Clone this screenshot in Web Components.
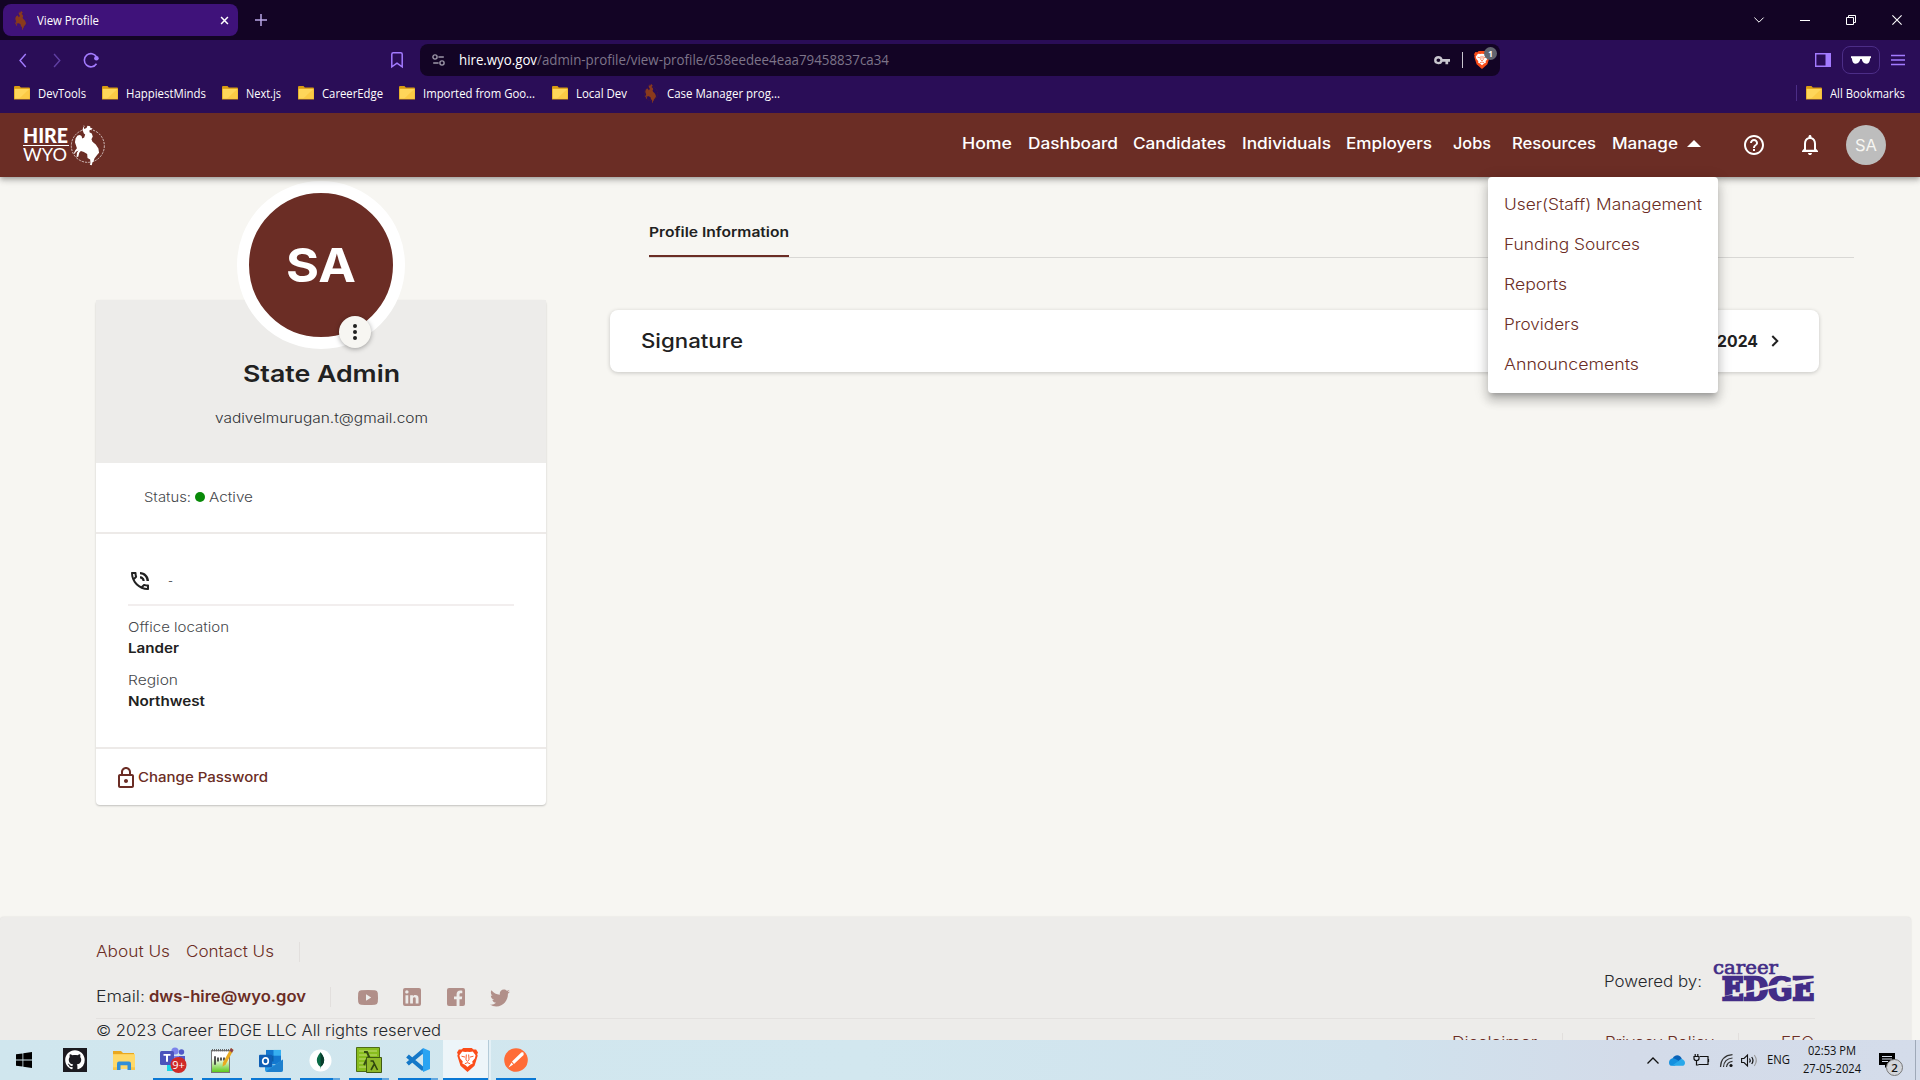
<!DOCTYPE html>
<html lang="en">
<head>
<meta charset="utf-8">
<title>View Profile</title>
<style>
html,body{margin:0;padding:0;width:1920px;height:1080px;overflow:hidden;background:#f7f6f2}
</style>
</head>
<body>
<hw-desktop></hw-desktop>
<script>
const BRONCO='<path d="M223 40l7-3 3-7 8 2 1 5 7 1-7 5-3 1 0 6 7 4 3 9-4 8 3 8 10 8 8 12 2 13-6 7-8 10-3 10-3 2-2 9-6-2 2-5-1-11-8-4-1-12-10-6-9-3-5 5-3 12-5 1 1-13 5-7-8 4-4 7-2-3 4-9 5-6-3-9-3-9 2-12 6-8 7-2 5 3 2 8 6-3 3-9-4-3-4-11 2-8 5-3-4-3z"/>';
const ICONS={
 bronco:['180 28 106 124','<circle cx="234" cy="91" r="50" fill="none" stroke="currentColor" stroke-width="2.6" stroke-dasharray="7 3" opacity=".75"/><g fill="currentColor">'+BRONCO+'</g>'],
 favicon:['186 28 96 124','<circle cx="234" cy="91" r="46" fill="none" stroke="#5a1f35" stroke-width="3" stroke-dasharray="7 5"/><g fill="#8a3a1c">'+BRONCO+'</g>'],
 close:['0 0 10 10','<path d="M1.2 1.2l7.6 7.6M8.8 1.2L1.2 8.8" stroke="currentColor" stroke-width="1.7" fill="none"/>'],
 winclose:['0 0 10 10','<path d="M.4 .4l9.2 9.2M9.6 .4L.4 9.6" stroke="#fff" stroke-width="1.1" fill="none"/>'],
 plus:['0 0 12 12','<path d="M6 0v12M0 6h12" stroke="#b9a6e6" stroke-width="1.5"/>'],
 winchev:['0 0 10 6','<path d="M.4 .6L5 5.2 9.6.6" stroke="#fff" fill="none"/>'],
 winmin:['0 0 10 10','<path d="M0 5.5h10" stroke="#fff"/>'],
 winrest:['0 0 10 10','<path d="M.5 2.5h7v7h-7zM2.5 2.5v-2h7v7h-2" stroke="#fff" fill="none"/>'],
 back:['0 0 9 16','<path d="M7.6 1L1.2 8l6.4 7" stroke="#a37bff" stroke-width="1.6" fill="none"/>'],
 fwd:['0 0 9 16','<path d="M1.2 1l6.4 7-6.4 7" stroke="#603fa3" stroke-width="1.6" fill="none"/>'],
 reload:['0 0 16 16','<path d="M13.5 11.8A6.6 6.6 0 1 1 13.600 4.800" stroke="#a37bff" stroke-width="1.6" fill="none"/><circle cx="13.4" cy="6.2" r="2.300" fill="#a37bff"/>'],
 bookmark:['0 0 12 16','<path d="M.8 2.3Q.8.8 2.3.8h7.4q1.5 0 1.5 1.5v12.6L6 11.2.8 14.9z" stroke="#a37bff" stroke-width="1.5" fill="none"/>'],
 tune:['0 0 13 12','<g stroke="#9d97a8" stroke-width="1.4" fill="none"><circle cx="3" cy="3" r="2.1"/><path d="M6.4 3h5.4M1.2 9h5.4"/><circle cx="10" cy="9" r="2.1"/></g>'],
 key:['0 0 20 12','<path fill="#c9c6cf" fill-rule="evenodd" d="M5.5 0a5.5 5.5 0 1 0 5.2 7.6h3.6V11h3.4V7.6H20V3.9h-9.3A5.5 5.5 0 0 0 5.5 0zm0 3.3a2.4 2.4 0 1 1 0 4.8 2.4 2.4 0 0 1 0-4.8z"/>'],
 brave:['0 0 20 24','<path fill="#fb4d1a" d="M4.200 1.600L6 0h8l1.800 1.600 2.400-.2L20 4.400l-.8 1.800.5 1.600-3 9.900L10 24l-6.700-6.300-3-9.900.5-1.600L0 4.400l1.800-3z"/><path fill="#fff" d="M5 3.600l2.900.5L10 3.700l2.100.4 2.900-.5 2.700 3.700-.6 3-2.600 3.200.5 1.900-2.500 1.400-2.500 2.100-2.500-2.100L5 15.400l.5-1.900-2.600-3.200-.6-3z"/><path fill="none" stroke="#fb4d1a" stroke-width=".9" d="M4.300 8.200l3.400.9M15.700 8.200l-3.400.9M8.900 6.500l-.4 5.300 1.500 1.500 1.500-1.500-.4-5.300M7.500 15.700l2.500-1 2.500 1"/>'],
 sidebar:['0 0 16 14','<path d="M.7.700h14.600v12.600H.7z" stroke="#a37bff" stroke-width="1.4" fill="none"/><path d="M10.500 1h5v12h-5z" fill="#a37bff"/>'],
 glasses:['0 0 20 8','<path fill="#fff" d="M0 .3h20v1.500l-.9.700c-.2 3.500-1.500 5.200-3.900 5.200-2.600 0-4.100-1.900-4.500-4.600h-1.400C8.900 5.800 7.400 7.700 4.800 7.700 2.400 7.700 1.100 6 .9 2.500L0 1.800z"/>'],
 menu:['0 0 14 12','<path d="M0 1.500h14M0 6h14M0 10.500h14" stroke="#a37bff" stroke-width="1.300"/>'],
 folder:['0 0 16 13','<path fill="#d89a12" d="M0 1.200Q0 0 1 0h4.500l1.300 1.500H15q1 0 1 1V12.500H0z"/><path fill="#ffd65a" d="M.6 2.600h15v9.300H.6z"/><path fill="#f9c53c" d="M15.600 2.600v9.300H5z" opacity=".7"/>'],
 tri:['0 0 14 7','<path fill="#fff" d="M0 7L7 0l7 7z"/>'],
 help:['2 2 20 20','<path fill="#fff" d="M11 18h2v-2h-2v2zm1-16C6.480 2 2 6.480 2 12s4.480 10 10 10 10-4.480 10-10S17.520 2 12 2zm0 18c-4.410 0-8-3.590-8-8s3.590-8 8-8 8 3.590 8 8-3.590 8-8 8zm0-14c-2.210 0-4 1.790-4 4h2c0-1.100.9-2 2-2s2 .9 2 2c0 2-3 1.750-3 5h2c0-2.250 3-2.500 3-5 0-2.210-1.790-4-4-4z"/>'],
 bell:['4 2.500 16 19.500','<path fill="#fff" d="M12 22c1.100 0 2-.9 2-2h-4c0 1.100.9 2 2 2zm6-6v-5c0-3.070-1.630-5.640-4.500-6.320V4c0-.83-.67-1.500-1.500-1.500s-1.500.67-1.500 1.500v.680C7.640 5.360 6 7.920 6 11v5l-2 2v1h16v-1l-2-2zm-2 1H8v-6c0-2.480 1.510-4.500 4-4.500s4 2.020 4 4.500v6z"/>'],
 dots:['0 0 4 16','<g fill="#212121"><circle cx="2" cy="2" r="2"/><circle cx="2" cy="8" r="2"/><circle cx="2" cy="14" r="2"/></g>'],
 phone:['3 3 18 18','<path fill="#212121" d="M20 15.500c-1.250 0-2.450-.2-3.570-.570-.1-.03-.21-.05-.31-.05-.26 0-.51.1-.71.290l-2.200 2.200c-2.830-1.440-5.150-3.750-6.590-6.590l2.200-2.200c.28-.28.36-.67.250-1.020C8.700 6.450 8.500 5.250 8.500 4c0-.55-.45-1-1-1H4c-.55 0-1 .45-1 1 0 9.390 7.610 17 17 17 .55 0 1-.45 1-1v-3.500c0-.55-.45-1-1-1zM5.030 5h1.500c.07.880.220 1.750.460 2.590L5.790 8.800c-.41-1.210-.67-2.480-.76-3.800zM19 18.970c-1.320-.09-2.600-.35-3.800-.76l1.200-1.200c.85.240 1.720.390 2.600.450v1.510zM18.500 12H21c0-5-4-9-9-9v2.200c3.600 0 6.500 3 6.500 6.800zm-4 0h2.200c0-2.600-2.100-4.700-4.700-4.700v2.200c1.400 0 2.500 1.100 2.500 2.500z"/>'],
 lock:['4 1 16 21','<path fill="#6b2d25" d="M18 8h-1V6c0-2.760-2.240-5-5-5S7 3.240 7 6v2H6c-1.100 0-2 .9-2 2v10c0 1.100.9 2 2 2h12c1.100 0 2-.9 2-2V10c0-1.100-.9-2-2-2zM9 6c0-1.660 1.340-3 3-3s3 1.340 3 3v2H9V6zm9 14H6V10h12v10zm-6-3c1.100 0 2-.9 2-2s-.9-2-2-2-2 .9-2 2 .9 2 2 2z"/>'],
 chevr:['0 0 8 12','<path d="M1.300 1l5 5-5 5" stroke="#212121" stroke-width="2" fill="none"/>'],
 youtube:['0 0 20 14','<path fill="#b18f89" fill-rule="evenodd" d="M3 .3Q10-.3 17 .3q2.500.2 2.800 2.500.4 4.200 0 8.400-.3 2.300-2.800 2.500-7 .6-14 0Q.5 13.500.2 11.200q-.4-4.200 0-8.400Q.5.500 3 .3zM8 4v6l5.200-3z"/>'],
 linkedin:['3 3 18 18','<path fill="#b18f89" d="M19 3a2 2 0 0 1 2 2v14a2 2 0 0 1-2 2H5a2 2 0 0 1-2-2V5a2 2 0 0 1 2-2h14m-.5 15.500v-5.300a3.260 3.260 0 0 0-3.260-3.260c-.85 0-1.840.520-2.320 1.300v-1.110h-2.790v8.370h2.790v-4.930c0-.77.620-1.400 1.390-1.400a1.400 1.400 0 0 1 1.400 1.400v4.930h2.790M6.880 8.560a1.680 1.680 0 0 0 1.680-1.680c0-.93-.75-1.690-1.680-1.690a1.690 1.690 0 0 0-1.690 1.690c0 .930.760 1.680 1.690 1.680m1.390 9.940v-8.370H5.500v8.370h2.770z"/>'],
 facebook:['3 3 18 18','<path fill="#b18f89" d="M5 3h14a2 2 0 0 1 2 2v14a2 2 0 0 1-2 2h-3.500v-6.800h2.300l.4-2.800h-2.700V9.600c0-.9.400-1.400 1.500-1.400H18.300V5.700c-.4-.1-1.200-.2-2-.2-2.300 0-3.700 1.400-3.700 3.800v2.100H10v2.800h2.600V21H5a2 2 0 0 1-2-2V5a2 2 0 0 1 2-2z"/>'],
 twitter:['1.500 3.500 21 17','<path fill="#b18f89" d="M22.460 6c-.77.350-1.600.580-2.460.690.880-.53 1.560-1.370 1.880-2.380-.83.500-1.750.850-2.720 1.050C18.370 4.500 17.260 4 16 4c-2.350 0-4.270 1.920-4.270 4.290 0 .340.040.670.110.980C8.280 9.090 5.110 7.380 3 4.790c-.37.630-.58 1.370-.58 2.150 0 1.490.750 2.810 1.910 3.560-.71 0-1.370-.2-1.950-.5v.030c0 2.080 1.480 3.820 3.440 4.210a4.220 4.220 0 0 1-1.930.070 4.280 4.280 0 0 0 4 2.980 8.521 8.521 0 0 1-5.330 1.840c-.34 0-.68-.02-1.020-.06C3.440 20.290 5.700 21 8.120 21 16 21 20.330 14.460 20.330 8.790c0-.19 0-.37-.01-.56.840-.6 1.560-1.360 2.140-2.230z"/>'],
 windows:['0 0 16 16','<path d="M0 2.300l6.500-.9v6.200H0zM7.300 1.300L16 0v7.600H7.300zM0 8.400h6.500v6.200L0 13.700zM7.300 8.400H16V16l-8.700-1.300z"/>'],
 github:['0 0 24 24','<path fill="#1c1a20" d="M0 0h24v24H0z"/><path fill="#fff" transform="translate(2.200 2.300) scale(1.220)" d="M8 0C3.580 0 0 3.580 0 8c0 3.540 2.290 6.530 5.470 7.590.4.070.550-.17.550-.38 0-.19-.01-.82-.01-1.490-2.010.370-2.530-.49-2.690-.94-.09-.23-.48-.94-.82-1.130-.28-.15-.68-.52-.01-.53.630-.01 1.080.580 1.230.820.720 1.210 1.870.870 2.330.660.070-.52.280-.87.510-1.070-1.780-.2-3.640-.89-3.640-3.950 0-.87.310-1.590.820-2.150-.08-.2-.36-1.020.080-2.120 0 0 .670-.21 2.200.820.640-.18 1.320-.27 2-.27s1.360.090 2 .270c1.530-1.040 2.200-.82 2.200-.82.440 1.100.160 1.920.080 2.120.510.560.820 1.270.820 2.150 0 3.070-1.870 3.750-3.650 3.950.290.250.540.730.540 1.480 0 1.070-.01 1.930-.01 2.200 0 .210.150.460.550.380A8.010 8.010 0 0 0 16 8c0-4.420-3.580-8-8-8z"/>'],
 explorer:['0 0 22 18','<path fill="#e9a820" d="M0 0h8l2 2h11v4H0z"/><path fill="#ffd968" d="M0 3h22v14H0z"/><path fill="#2f8fd8" d="M4 18v-6q0-2 2-2h10q2 0 2 2v6h-3.500v-4.500h-7V18z"/><path fill="#f7c64a" d="M0 15.500h4V18H0zM18 15.500h4V18h-4z"/>'],
 teams:['0 0 27 26','<circle cx="15" cy="4" r="3.600" fill="#7b83eb"/><circle cx="21.500" cy="5" r="2.700" fill="#5059c9"/><path fill="#5059c9" d="M15 9h10v8q-2 5-7 4z"/><path fill="#7b83eb" d="M9 9h10v11q-4 5-10 1z"/><rect y="4" width="14" height="14" rx="1.500" fill="#4b53bc"/><path fill="#19d5e6" d="M7 18h8v6H7z"/><path fill="#fff" d="M3.500 7h7v1.800H8v6H6v-6H3.500z"/><circle cx="18.500" cy="18" r="8" fill="#cf2a27"/><text x="18.500" y="22" font-family="Open Sans" font-size="11" text-anchor="middle" fill="#fff">9+</text>'],
 notepad:['0 0 24 24','<defs><linearGradient id="n" x2="0" y2="1"><stop offset=".35" stop-color="#fff"/><stop offset="1" stop-color="#59c814"/></linearGradient></defs><path fill="url(#n)" stroke="#777" d="M1.500 2.500h18v21h-18z"/><path d="M2 2h17" stroke="#666" stroke-width="2" stroke-dasharray="1 1"/><path d="M5 8v8M8 9v4M11 9v3M14 9v3" stroke="#222" stroke-width="1.500"/><path fill="#e9ab20" d="M21 0l2.500 2-8 14-3 2 .5-4z"/><path fill="#8b3f4d" d="M21 0l2.500 2-1.500 2.500-2.500-2z"/>'],
 outlook:['0 0 24 24','<path fill="#1378cf" d="M7 1h15v15H7z"/><path fill="#36b0f0" d="M14.500 1H22v6h-7.500z"/><path fill="#0a5ea8" d="M7 7h7.500v6H7z"/><path fill="#2a9be6" d="M6 12l9 5 9-6v11q0 2-2 2H8q-2 0-2-2z"/><path fill="#1265b5" d="M24 11L7 23.500q.5.500 1 .5h14q2 0 2-2z" opacity=".5"/><rect y="6" width="13" height="13" rx="1" fill="#0f5fb5"/><ellipse cx="6.500" cy="12.500" rx="2.800" ry="3.300" fill="none" stroke="#fff" stroke-width="1.700"/>'],
 mongo:['0 0 24 24','<circle cx="12" cy="12" r="11.500" fill="#fff"/><path fill="#0a6b46" d="M12 3.500q5 6 3.500 10.500Q14.500 17 12.300 18.500L12 21l-.3-2.500Q9.500 17 8.500 14 7 9.500 12 3.500z"/><path fill="#0a3d2c" d="M12 3.500q5 6 3.500 10.500Q14.500 17 12.300 18.500z"/>'],
 lambda:['0 0 26 26','<path fill="#88bd1e" stroke="#4d6d16" d="M.5.500h23v24H.5z"/><path d="M3 4h18M3 8h18M3 12h8M3 16h8M3 20h8" stroke="#c3dd76" stroke-width="1"/><path d="M8 5h3l6 14M12 10L8 18" stroke="#344d12" stroke-width="2" fill="none"/><path fill="#8fb82a" stroke="#3f5a12" d="M10.500 10.500h15v15h-15z"/><path d="M14.500 14h2.500l4.500 9M18 17.500L15 23" stroke="#2f450f" stroke-width="1.600" fill="none"/>'],
 vscode:['0 0 24 24','<path d="M1.500 16L17.500 2.500M1.500 8L17.500 21.500" stroke="#1478c8" stroke-width="4.200"/><path fill="#2aa4f2" d="M17 0l7 3v18l-7 3z"/><path fill="#1b8ade" d="M17 0v6.500l-3-2.300z"/>'],
 postman:['0 0 24 24','<circle cx="12" cy="12" r="11.800" fill="#ff6c37"/><path fill="#fff" d="M19.500 4.500q-2-1-3 .7L8 13.500l2 2.500 8-7.500q2.500-2 1.500-4zM7.500 14.500l-3 5 4.700-3z"/>'],
 trayup:['0 0 12 7','<path d="M.5 6.500L6 1l5.500 5.500" stroke="#111" stroke-width="1.300" fill="none"/>'],
 cloud:['0 0 16 10','<path fill="#0a63b8" d="M3 5Q4 .500 8 .200q3.500 0 4.800 3.200l-3 3z"/><path fill="#1490df" d="M0 7q0-3.500 4-4 2-.2 5.500 2.300L6 9.800H3Q0 9.800 0 7z"/><path fill="#28a8ea" d="M3 9.800L9.500 5.500Q12 3 14 4q2 1 2 3 0 2.800-3 2.800z"/>'],
 battery:['0 0 17 12','<path d="M7 2.500h8v8H5.500M15.500 5v3M1 2.500h5v2q0 2-2.500 2T1 4.500zM2.200 2.500V0M4.800 2.500V0M3.500 6.500v4.500h2" stroke="#111" stroke-width="1.200" fill="none"/>'],
 wifi:['0 0 13 13','<path d="M.5 13Q1 1.500 12.500.7M3.500 13Q4 4.800 12.500 4M6.500 13Q7 8 12.500 7.300" stroke="#333" stroke-width="1.200" fill="none"/><circle cx="11" cy="11.500" r="1.600" fill="#111"/>'],
 speaker:['0 0 17 13','<path d="M.6 4.500H3L6.500 1v11L3 8.500H.6z" stroke="#111" stroke-width="1.100" fill="none"/><path d="M8.500 4.500q1.500 2 0 4M10.700 3q2.600 3.500 0 7" stroke="#111" stroke-width="1.200" fill="none"/><path d="M13.300 1q4 5.500 0 11" stroke="#999" stroke-width="1.100" fill="none"/>'],
 notif:['0 0 16 15','<path d="M0 0h16v12H9l-3 3v-3H0z" fill="#000"/><path d="M3 3.500h10M3 6h10M3 8.500h6" stroke="#d4dcea"/>']
};

class HwIcon extends HTMLElement{
 connectedCallback(){
  if(this.shadowRoot)return;
  const [vb,body]=ICONS[this.getAttribute('name')];
  const w=this.getAttribute('w'),h=this.getAttribute('h')||w;
  this.attachShadow({mode:'open'}).innerHTML=`<style>:host{display:block;flex:none;width:${w}px;height:${h}px}svg{display:block;overflow:visible}</style><svg width="${w}" height="${h}" viewBox="${vb}" preserveAspectRatio="none">${body}</svg>`;
 }
}
customElements.define('hw-icon',HwIcon);

/* A label of a set width: the glyphs are stretched or narrowed to fill it. */
class HwLabel extends HTMLElement{
 connectedCallback(){
  if(this.shadowRoot)return;
  const w=+this.getAttribute('w');
  this.attachShadow({mode:'open'}).innerHTML=`<style>:host{display:block;flex:none;width:${w}px;white-space:nowrap}span{display:inline-block;transform-origin:0 50%}</style><span><slot></slot></span>`;
  const s=this.shadowRoot.querySelector('span');
  const n=s.getBoundingClientRect().width;
  if(n)s.style.transform=`scaleX(${w/n})`;
 }
}
customElements.define('hw-label',HwLabel);

function define(tag,css,html){
 const t=document.createElement('template');
 t.innerHTML=`<style>*{box-sizing:border-box}${css}</style>${html}`;
 customElements.define(tag,class extends HTMLElement{
  connectedCallback(){
   if(this.shadowRoot)return;
   this.attachShadow({mode:'open'}).append(document.importNode(t.content,true));
  }
 });
}

define('hw-bookmark',':host{display:flex;align-items:center;flex:none;gap:8px}','<hw-icon name="folder" w="16" h="14"></hw-icon><slot></slot>');

define('hw-chrome',`
:host{display:block;flex:none;height:113px;background:#2a0d57;color:#fff;font:11.8px/16px "Open Sans",sans-serif}
.row{display:flex;align-items:center}
.strip{height:40px;background:#130425;padding-left:3px}
.tab{height:32px;width:235px;border-radius:8px;background:#3f127a;padding:0 9px 0 11px}
.tab hw-label{margin-left:9px}.tab .x{margin-left:auto}
.bar{height:40px;padding-left:19px}
.url{height:32px;width:1080px;margin:0 0 0 17px;border-radius:8px;background:#130425;padding:0 10px 0 12px;font-size:13.600px}
.url .p{color:#7d7489}
.sep{width:1px;background:#c9c6cf;height:16px;margin:0 11px 0 12px}
.shield{position:relative}
.badge{position:absolute;left:10px;top:-4px;width:13px;height:13px;border-radius:7px;background:#636670;color:#fff;font:bold 8px/13px "Open Sans";text-align:center}
.glasses{width:38px;height:28px;border:1px solid #4c2d87;border-radius:8px;display:flex;align-items:center;justify-content:center;margin:0 11px}
.marks{height:26px;padding:0 15px 0 14px}
`,`
<div class="row strip">
 <div class="row tab"><hw-icon name="favicon" w="14" h="19"></hw-icon><hw-label w="62">View Profile</hw-label><hw-icon class="x" name="close" w="9"></hw-icon></div>
 <hw-icon name="plus" w="12" style="margin-left:17px"></hw-icon>
 <hw-icon name="winchev" w="10" h="6" style="margin-left:auto"></hw-icon>
 <hw-icon name="winmin" w="10" style="margin-left:36px"></hw-icon>
 <hw-icon name="winrest" w="10" style="margin-left:36px"></hw-icon>
 <hw-icon name="winclose" w="10" style="margin:0 18px 0 36px"></hw-icon>
</div>
<div class="row bar">
 <hw-icon name="back" w="8" h="15"></hw-icon><hw-icon name="fwd" w="8" h="15" style="margin-left:26px"></hw-icon><hw-icon name="reload" w="16" style="margin-left:22px"></hw-icon>
 <hw-icon name="bookmark" w="12" h="16" style="margin-left:292px"></hw-icon>
 <div class="row url"><hw-icon name="tune" w="13" h="12"></hw-icon><hw-label w="78" style="margin-left:14px">hire.wyo.gov</hw-label><hw-label class="p" w="352">/admin-profile/view-profile/658eedee4eaa79458837ca34</hw-label>
 <hw-icon name="key" w="16" h="9" style="margin-left:auto"></hw-icon><div class="sep"></div><div class="shield"><hw-icon name="brave" w="16" h="18"></hw-icon><div class="badge">1</div></div></div>
 <hw-icon name="sidebar" w="16" h="14" style="margin-left:auto"></hw-icon><div class="glasses"><hw-icon name="glasses" w="20" h="8"></hw-icon></div><hw-icon name="menu" w="14" h="12" style="margin-right:15px"></hw-icon>
</div>
<div class="row marks">
 <hw-bookmark><hw-label w="48">DevTools</hw-label></hw-bookmark>
 <hw-bookmark style="margin-left:16px"><hw-label w="80">HappiestMinds</hw-label></hw-bookmark>
 <hw-bookmark style="margin-left:16px"><hw-label w="35">Next.js</hw-label></hw-bookmark>
 <hw-bookmark style="margin-left:17px"><hw-label w="61">CareerEdge</hw-label></hw-bookmark>
 <hw-bookmark style="margin-left:16px"><hw-label w="112">Imported from Goo...</hw-label></hw-bookmark>
 <hw-bookmark style="margin-left:17px"><hw-label w="51">Local Dev</hw-label></hw-bookmark>
 <hw-icon name="favicon" w="14" h="19" style="margin-left:17px"></hw-icon><hw-label w="113" style="margin-left:9px">Case Manager prog...</hw-label>
 <div style="width:1px;height:16px;background:#4c2d87;margin:0 9px 0 auto"></div>
 <hw-bookmark><hw-label w="75">All Bookmarks</hw-label></hw-bookmark>
</div>`);

define('hw-logo',`
:host{display:flex;color:#fff;flex:none;height:41px}
.t{width:46px;margin-right:1px;font-family:Lato,sans-serif}
.a{font-weight:900;font-size:21px;line-height:20px;height:20px}
.l{height:1.500px;background:#fff}
.b{font-size:18px;font-weight:400;line-height:17px}
`,`<div class="t"><hw-label class="a" w="45">HIRE</hw-label><div class="l"></div><hw-label class="b" w="44">WYO</hw-label></div><hw-icon name="bronco" w="35" h="41"></hw-icon>`);

define('hw-menu',`
:host{position:absolute;left:1488px;top:64px;width:230px;height:216px;background:#fff;border-radius:4px;padding:8px 16px;color:#6b2d25;font-weight:300;font-size:15.400px;line-height:40px;box-shadow:0 5px 5px -3px rgba(0,0,0,.2),0 8px 10px 1px rgba(0,0,0,.14),0 3px 14px 2px rgba(0,0,0,.12)}
`,`<hw-label w="198">User(Staff) Management</hw-label><hw-label w="136">Funding Sources</hw-label><hw-label w="63">Reports</hw-label><hw-label w="75">Providers</hw-label><hw-label w="135">Announcements</hw-label>`);

define('hw-header',`
:host{display:flex;flex:none;position:relative;z-index:2;height:64px;background:#6b2d25;align-items:center;padding:0 34px 0 23px;color:#fff;font-size:15.400px;font-weight:500;box-shadow:0 2px 4px -1px rgba(0,0,0,.2),0 4px 5px rgba(0,0,0,.14),0 1px 10px rgba(0,0,0,.12)}
nav{display:flex;align-items:center;margin:0 0 4px auto;gap:15.500px}
.av{width:40px;height:40px;border-radius:50%;background:#bdbdbd;color:#f7f6f2;display:flex;align-items:center;justify-content:center;font-weight:400;font-size:15.500px;margin-left:28px}
`,`<hw-logo></hw-logo><nav><hw-label w="50">Home</hw-label><hw-label w="90">Dashboard</hw-label><hw-label w="93">Candidates</hw-label><hw-label w="89">Individuals</hw-label><hw-label w="86">Employers</hw-label><hw-label w="38" style="margin-left:5px">Jobs</hw-label><hw-label w="84" style="margin-left:6px">Resources</hw-label><hw-label w="66">Manage</hw-label><hw-icon name="tri" w="14" h="7" style="margin-left:-6px"></hw-icon></nav>
<hw-icon name="help" w="20" style="margin-left:43px"></hw-icon><hw-icon name="bell" w="16" h="20" style="margin-left:38px"></hw-icon><div class="av"><hw-label w="22">SA</hw-label></div><hw-menu></hw-menu>`);

define('hw-avatar',`
:host{display:flex;position:relative;width:168px;height:168px;border-radius:50%;border:12px solid #fff;background:#6b2d25;align-items:center;justify-content:center;color:#fff;font-weight:700;font-size:47px;line-height:56px}
.more{position:absolute;left:90px;top:123px;width:32px;height:32px;border-radius:50%;background:#f7f6f2;display:flex;align-items:center;justify-content:center;box-shadow:0 1px 5px rgba(0,0,0,.35)}
`,`<hw-label w="70">SA</hw-label><div class="more"><hw-icon name="dots" w="4" h="16"></hw-icon></div>`);

define('hw-profile',`
:host{display:flex;flex-direction:column;flex:none;width:450px;height:505px;margin:123px 0 0 96px;background:#fff;border-radius:4px;box-shadow:0 1px 2px rgba(0,0,0,.22);font-size:13.300px;line-height:20px;color:#45474b;font-weight:300}
.head{display:flex;flex-direction:column;align-items:center;height:163px;background:#edecea}
hw-avatar{margin-top:-119px}
.name{margin-top:10px;font-size:23.300px;line-height:30px;font-weight:600;color:#212121}
.mail{margin-top:19px;color:#303236}
.status{display:flex;align-items:center;height:71px;padding:0 0 2px 48px;border-bottom:2px solid #edeae8}
.dot{width:10px;height:10px;border-radius:50%;background:#088a08;margin:0 4px}
.info{height:215px;padding:34px 32px 0;border-bottom:2px solid #edeae8}
.ph{display:flex;align-items:center;height:38px;padding:0 0 11px 3px;border-bottom:2px solid #f2eeee}
b{font-weight:600;color:#212121}
.pw{display:flex;align-items:center;height:56px;padding-left:22px;color:#6b2d25;font-weight:500}
`,`<div class="head"><hw-avatar></hw-avatar><hw-label class="name" w="157">State Admin</hw-label><hw-label class="mail" w="213">vadivelmurugan.t@gmail.com</hw-label></div>
<div class="status"><hw-label w="47">Status:</hw-label><div class="dot"></div><hw-label w="44">Active</hw-label></div>
<div class="info"><div class="ph"><hw-icon name="phone" w="18"></hw-icon><hw-label w="5" style="margin-left:19px">-</hw-label></div>
<hw-label w="101" style="margin-top:11px">Office location</hw-label><hw-label w="51" style="margin-top:1px"><b>Lander</b></hw-label><hw-label w="50" style="margin-top:12px">Region</hw-label><hw-label w="77" style="margin-top:1px"><b>Northwest</b></hw-label></div>
<div class="pw"><hw-icon name="lock" w="16" h="21"></hw-icon><hw-label w="130" style="margin-left:4px">Change Password</hw-label></div>`);

define('hw-content',`
:host{display:flex;flex-direction:column;margin-left:64px;color:#212121}
.tabs{display:flex;width:1205px;height:81px;margin-left:39px;border-bottom:1px solid #d9d8d5}
.tab{display:flex;align-items:flex-end;height:80px;width:140px;padding-bottom:13px;border-bottom:2px solid #6b2d25;font-weight:600;font-size:13.300px;line-height:20px}
.card{display:flex;align-items:center;width:1209px;height:62px;margin-top:52px;border-radius:8px;background:#fff;padding:0 40px 0 31px;box-shadow:0 1px 4px rgba(0,0,0,.2)}
.s{font-size:19.500px;font-weight:500}.d{margin:0 13px 0 auto;font-size:15.500px;font-weight:700}
`,`<div class="tabs"><div class="tab"><hw-label w="140">Profile Information</hw-label></div></div>
<div class="card"><hw-label class="s" w="102">Signature</hw-label><hw-label class="d" w="47">/2024</hw-label><hw-icon name="chevr" w="8" h="12"></hw-icon></div>`);

define('hw-edge',`:host{display:block;flex:none;width:102px;height:42px}svg{display:block}`,`
<svg width="102" height="42" viewBox="0 0 102 42"><g fill="#432d87" stroke="#432d87" font-family="DejaVu Serif,serif"><text x="0" y="12.500" font-size="19" textLength="65" lengthAdjust="spacingAndGlyphs" stroke-width=".7">career</text>
<text x="9" y="38.500" font-size="32" font-weight="700" textLength="92" lengthAdjust="spacingAndGlyphs" stroke-width="2.600">EDGE</text></g>
<path d="M8 35.500L48 27l26-6 28-4v3L72 25l-24 4.500z" fill="#edecea"/></svg>`);

define('hw-footer',`
:host{display:flex;flex-direction:column;flex:none;width:1911px;height:163px;background:#edecea;border-radius:4px 4px 0 0;box-shadow:0 0 2px rgba(0,0,0,.12);padding:0 96px;font-size:15.400px;font-weight:300;color:#26282c;line-height:20px}
.r{display:flex;align-items:center}.top{display:flex;height:102px;border-bottom:1px solid #e3e1df;width:1719px}
.c{flex:1;display:flex;flex-direction:column;gap:25px;padding-top:25px}.c .r{height:20px}
.p{height:42px;margin-top:44px}
.link{color:#6b2d25}.v{width:1px;height:20px;background:#e2dfdd}
b{font-weight:600;color:#6b2d25}
`,`<div class="top"><div class="c"><div class="r"><hw-label class="link" w="74">About Us</hw-label><hw-label class="link" w="88" style="margin-left:16px">Contact Us</hw-label><div class="v" style="margin-left:25px"></div></div>
<div class="r"><hw-label w="49">Email:</hw-label><hw-label w="157" style="margin-left:4px"><b>dws-hire@wyo.gov</b></hw-label><div class="v" style="margin:0 27px 0 24px"></div><hw-icon name="youtube" w="20" h="15"></hw-icon><hw-icon name="linkedin" w="18" style="margin-left:25px"></hw-icon><hw-icon name="facebook" w="18" style="margin-left:26px"></hw-icon><hw-icon name="twitter" w="20" h="17" style="margin-left:25px"></hw-icon></div></div>
<div class="r p"><hw-label w="98">Powered by:</hw-label><hw-edge style="margin-left:11px"></hw-edge></div></div>
<div class="r" style="align-items:flex-start"><hw-label w="345" style="margin-top:2px">© 2023 Career EDGE LLC All rights reserved</hw-label>
<div class="r link" style="margin:14px 0 0 auto;width:363px"><hw-label w="85">Disclaimer</hw-label><div class="v" style="margin:0 42px 0 25px"></div><hw-label w="109">Privacy Policy</hw-label><div class="v" style="margin:0 42px 0 24px"></div><hw-label w="33">EEO</hw-label></div></div>`);

define('hw-site',`:host{display:flex;flex-direction:column;flex:none;height:927px;overflow:hidden;background:#f7f6f2;font-family:Inter,sans-serif}main{display:flex;flex:none;height:740px}`,`<hw-header></hw-header><main><hw-profile></hw-profile><hw-content></hw-content></main><hw-footer></hw-footer>`);

define('hw-app',`:host{display:flex;flex-direction:column;align-items:center;justify-content:center;flex:none;width:40px;height:40px;margin-right:9px;padding-top:2px;border-bottom:2px solid #0a78d4}:host([idle]){border-color:transparent}:host([multi]){border-image:linear-gradient(90deg,#0a78d4 80%,#62a8e0 80%) 1}:host([active]){width:45px;background:#edf5f9}`,`<slot></slot>`);

define('hw-taskbar',`
:host{display:flex;align-items:center;flex:none;height:40px;background:linear-gradient(90deg,#d0e6ee 0,#d2e7ef 45%,#d0e2ed 72%,#d3dbe9 85%,#d4dcea);color:#111;font:12px/18px "Open Sans",sans-serif;padding-left:16px}
.clock{width:58px;display:flex;flex-direction:column;align-items:center;margin-left:13px}
.n{position:relative;margin-left:18px}.n div{position:absolute;left:7px;top:6px;width:17px;height:17px;border-radius:50%;border:1px solid #777;background:#d2d5da;font:600 11.500px/15px "Open Sans";text-align:center}
`,`<hw-icon name="windows" w="16"></hw-icon>
<hw-app idle style="margin-left:23px"><hw-icon name="github" w="24"></hw-icon></hw-app><hw-app idle><hw-icon name="explorer" w="22" h="19"></hw-icon></hw-app>
<hw-app><hw-icon name="teams" w="27" h="26"></hw-icon></hw-app><hw-app><hw-icon name="notepad" w="24" h="25"></hw-icon></hw-app><hw-app><hw-icon name="outlook" w="24" h="23"></hw-icon></hw-app><hw-app multi><hw-icon name="mongo" w="23"></hw-icon></hw-app><hw-app multi><hw-icon name="lambda" w="26" h="26"></hw-icon></hw-app><hw-app multi style="margin-right:5px"><hw-icon name="vscode" w="24"></hw-icon></hw-app>
<hw-app active style="margin-right:0"><hw-icon name="brave" w="21" h="24" style="margin-left:3px"></hw-icon></hw-app><div style="width:3px;height:40px;background:#e3f0f6;border-left:1px solid #b4cbd8;margin-right:5px"></div><hw-app><hw-icon name="postman" w="24"></hw-icon></hw-app>
<hw-icon name="trayup" w="12" h="7" style="margin-left:auto"></hw-icon><hw-icon name="cloud" w="16" h="11" style="margin-left:10px"></hw-icon><hw-icon name="battery" w="17" h="12" style="margin-left:8px"></hw-icon><hw-icon name="wifi" w="13" style="margin-left:10px"></hw-icon><hw-icon name="speaker" w="17" h="13" style="margin-left:8px"></hw-icon><hw-label w="23" style="margin-left:9px">ENG</hw-label>
<div class="clock"><hw-label w="48">02:53 PM</hw-label><hw-label w="58">27-05-2024</hw-label></div><div class="n"><hw-icon name="notif" w="16" h="15"></hw-icon><div>2</div></div><div style="width:1px;height:40px;background:#9fa9b8;margin:0 4px 0 20px"></div>`);

define('hw-desktop',`:host{display:flex;flex-direction:column;width:1920px;height:1080px;overflow:hidden}`,`<hw-chrome></hw-chrome><hw-site></hw-site><hw-taskbar></hw-taskbar>`);
</script>
</body>
</html>
